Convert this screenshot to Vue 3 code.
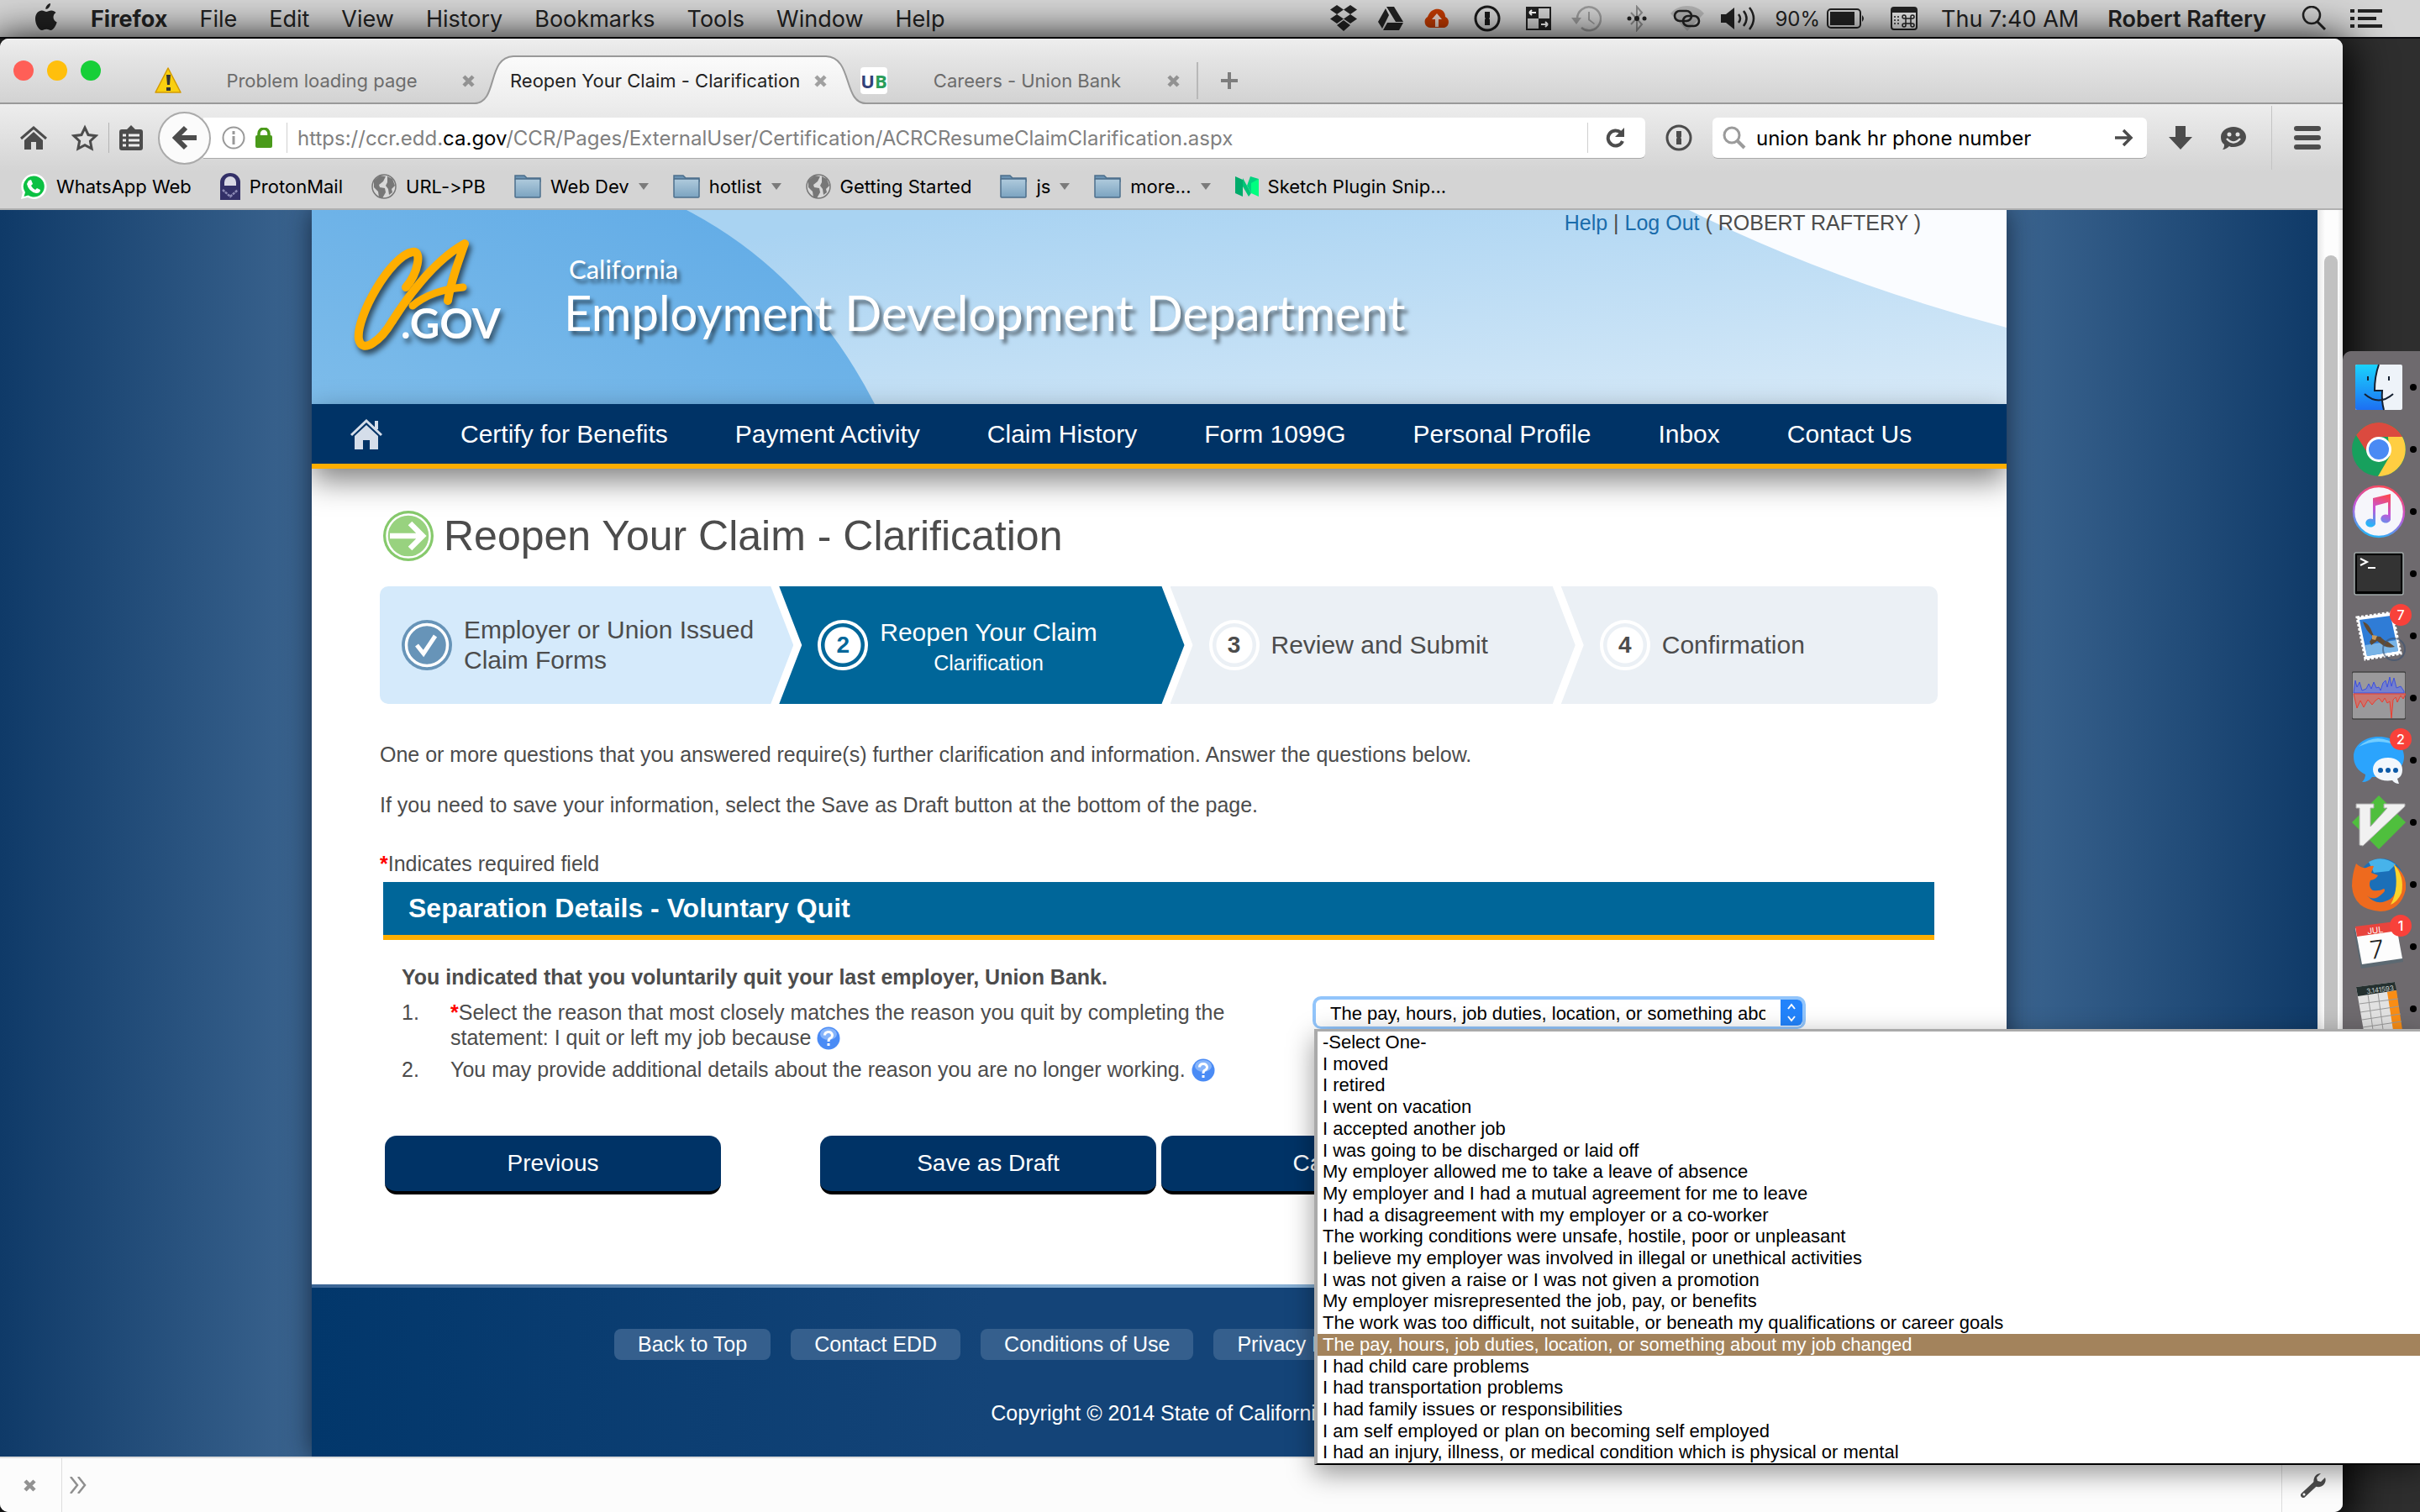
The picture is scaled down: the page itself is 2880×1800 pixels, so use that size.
<script setup>
import { ref } from 'vue'

const menus = ['File', 'Edit', 'View', 'History', 'Bookmarks', 'Tools', 'Window', 'Help']

const bookmarks = [
  { label: 'WhatsApp Web', icon: 'whatsapp' },
  { label: 'ProtonMail', icon: 'proton' },
  { label: 'URL->PB', icon: 'globe' },
  { label: 'Web Dev', icon: 'folder' },
  { label: 'hotlist', icon: 'folder' },
  { label: 'Getting Started', icon: 'globe' },
  { label: 'js', icon: 'folder' },
  { label: 'more...', icon: 'folder' },
  { label: 'Sketch Plugin Snip...', icon: 'medium' },
]

const siteNav = [
  'Certify for Benefits',
  'Payment Activity',
  'Claim History',
  'Form 1099G',
  'Personal Profile',
  'Inbox',
  'Contact Us',
]

const reasons = [
  '-Select One-',
  'I moved',
  'I retired',
  'I went on vacation',
  'I accepted another job',
  'I was going to be discharged or laid off',
  'My employer allowed me to take a leave of absence',
  'My employer and I had a mutual agreement for me to leave',
  'I had a disagreement with my employer or a co-worker',
  'The working conditions were unsafe, hostile, poor or unpleasant',
  'I believe my employer was involved in illegal or unethical activities',
  'I was not given a raise or I was not given a promotion',
  'My employer misrepresented the job, pay, or benefits',
  'The work was too difficult, not suitable, or beneath my qualifications or career goals',
  'The pay, hours, job duties, location, or something about my job changed',
  'I had child care problems',
  'I had transportation problems',
  'I had family issues or responsibilities',
  'I am self employed or plan on becoming self employed',
  'I had an injury, illness, or medical condition which is physical or mental',
]
const reason = ref(reasons[14])
const query = ref('union bank hr phone number')

const footerLinks = ['Back to Top', 'Contact EDD', 'Conditions of Use', 'Privacy Policy']
</script>

<template>
  <div class="desktop">
    <header class="menubar">
      <svg class="apple" width="26" height="32" viewBox="0 0 26 32"><path d="M18 0c.3 3.600-2.600 7-5.600 7C12 3.600 15 .5 18 0zM24.500 11c-4.600 3-3.600 9.600 1.200 11.500C24.500 26.500 21.500 32 18.400 32c-2 0-2.800-1.200-5.200-1.200S10 32 8 32C4 32 0 24.500 0 18.500 0 12 4 8.500 7.800 8.500c2.200 0 4 1.400 5.400 1.400 1.300 0 3.400-1.500 6-1.500 2 0 4 1 5.300 2.600z" fill="#222"/></svg>
      <strong>Firefox</strong>
      <span v-for="m in menus" :key="m">{{ m }}</span>
      <div class="status">
        <svg width="34" height="32" viewBox="0 0 34 32"><g fill="#222"><path d="M9 0l8 5.500L9 11 1 5.500zM25 0l8 5.500-8 5.500-8-5.500zM9 11l8 5.500L9 22l-8-5.500zM25 11l8 5.500-8 5.500-8-5.500zM9 24l8-6 8 6-8 7z"/></g></svg>
        <svg class="g24" width="30" height="28" viewBox="0 0 30 28"><g fill="#222"><path d="M10 0h9l11 18h-9zM9 2l4 8L5 26 0 18zM11 19h19l-5 9H6z"/></g></svg>
        <svg class="g24" width="32" height="24" viewBox="0 0 32 24"><path d="M8 23a7 7 0 0 1-3-13C8 2 14 0 19 1c5 1 7 5 7 9a7 7 0 0 1-1 13z" fill="#c03a00"/><path d="M16 6l6 7h-4v9h-4v-9h-4z" fill="#e8d2c8"/></svg>
        <svg class="g28" width="32" height="32" viewBox="0 0 32 32"><circle cx="16" cy="16" r="14" fill="none" stroke="#1a1a1a" stroke-width="3"/><path d="M13 8h6v7l-1 1 1 1v7h-6v-7l1-1-1-1z" fill="#1a1a1a"/></svg>
        <svg class="g30" width="30" height="28" viewBox="0 0 30 28"><rect x="1" y="1" width="28" height="26" fill="none" stroke="#222" stroke-width="2"/><path d="M0 0h15v14H0zM15 14h15v14H15z" fill="#222"/><path d="M4 7h8M4 7l3-3M4 7l3 3M26 21h-8M26 21l-3-3M26 21l-3 3" stroke="#fff" stroke-width="2" fill="none"/></svg>
        <svg class="g24" width="36" height="32" viewBox="0 0 36 32"><path d="M7 16a14 14 0 1 1 5 11" fill="none" stroke="#9b9b9b" stroke-width="2.500"/><path d="M0 15h12l-6 8zM20 8h2v9l6 5-1 1-7-5z" fill="#9b9b9b"/></svg>
        <svg class="g30" width="24" height="32" viewBox="0 0 24 32"><path d="M5 9l13 14-6 7V2l6 7L5 23" fill="none" stroke="#8c8c8c" stroke-width="2"/><g fill="#222"><circle cx="3" cy="16" r="2.500"/><circle cx="12" cy="16" r="3"/><circle cx="21" cy="16" r="2.500"/></g></svg>
        <svg class="g28" width="40" height="30" viewBox="0 0 40 30"><path d="M0 9C10-3 30-3 40 9L20 30z" fill="#b3b3b3"/><g fill="none" stroke="#222" stroke-width="2.600"><rect x="5" y="6" width="20" height="12" rx="6"/><rect x="15" y="12" width="19" height="12" rx="6"/></g></svg>
        <svg class="g20" width="42" height="30" viewBox="0 0 42 30"><path d="M0 10h6l10-8v26L6 20H0z" fill="#222"/><path d="M21 10q4 5 0 10M27 6q7 9 0 18M34 2q10 13 0 26" fill="none" stroke="#222" stroke-width="2.500"/></svg>
        <span class="g22">90%</span>
        <svg class="g8" width="46" height="24" viewBox="0 0 46 24"><rect x="1" y="1" width="39" height="22" rx="4" fill="none" stroke="#222" stroke-width="2"/><rect x="4" y="4" width="29" height="16" fill="#222"/><path d="M42 8q4 4 0 8z" fill="#222"/></svg>
        <svg class="g30" width="32" height="28" viewBox="0 0 32 28"><rect x="1" y="1" width="30" height="26" rx="3" fill="#e6e6e6" stroke="#222" stroke-width="2"/><path d="M1 1h30v6H1z" fill="#222"/><path d="M4 12h2M8 12h2M4 16h2M8 16h2M4 20h2M8 20h2" stroke="#555" stroke-width="2"/><path d="M18 14h6v6h-6zM18 14h-2a2 2 0 1 1 2-2zM24 14v-2a2 2 0 1 1 2 2zM18 20v2a2 2 0 1 1-2-2zM24 20h2a2 2 0 1 1-2 2z" fill="none" stroke="#222" stroke-width="1.500"/></svg>
        <span class="g28">Thu 7:40 AM</span>
        <span class="g34 semi">Robert Raftery</span>
        <svg class="g42" width="30" height="30" viewBox="0 0 30 30"><circle cx="12" cy="11" r="10" fill="none" stroke="#222" stroke-width="2.500"/><path d="M19 19l9 9" stroke="#222" stroke-width="3"/></svg>
        <svg class="g28" width="38" height="22" viewBox="0 0 38 22"><path d="M0 2h5M9 2h29M0 11h5M9 11h22M0 20h5M9 20h29" stroke="#222" stroke-width="4"/></svg>
      </div>
    </header>

    <div class="stage">
      <div class="window">
        <div class="tabstrip">
          <div class="lights"><i class="red"></i><i class="yellow"></i><i class="green"></i></div>
          <div class="tab first">
            <svg width="32" height="32" viewBox="0 0 32 32"><path d="M16 1l15 29H1z" fill="#f9cf10" stroke="#d39a00" stroke-width="1.500" stroke-linejoin="round"/><path d="M14 9h5l-1 12h-3zM14 24h5v4h-5z" fill="#333"/></svg>
            <span>Problem loading page</span>
            <button class="x" aria-label="Close tab"><svg width="15" height="15" viewBox="0 0 15 15"><path d="M2 2l11 11M13 2L2 13" stroke="#929292" stroke-width="4.500"/></svg></button>
          </div>
          <div class="tab active">
            <svg class="shape" width="465" height="58" viewBox="0 0 465 58" preserveAspectRatio="none">
              <defs><linearGradient id="tabfill" x1="0" y1="0" x2="0" y2="1"><stop offset="0" stop-color="#fbfbfb"/><stop offset="1" stop-color="#ededed"/></linearGradient></defs>
              <path d="M0 58C28 56 14 2 46 1H418C450 2 438 56 465 58z" fill="url(#tabfill)"/>
              <path d="M0 57C28 56 14 2 46 1H418C450 2 438 56 465 57" fill="none" stroke="#999" stroke-width="2"/>
            </svg>
            <span>Reopen Your Claim - Clarification</span>
            <button class="x" aria-label="Close tab"><svg width="15" height="15" viewBox="0 0 15 15"><path d="M2 2l11 11M13 2L2 13" stroke="#a0a0a0" stroke-width="4.500"/></svg></button>
          </div>
          <div class="tab third">
            <b class="ub"><em>U</em>B</b>
            <span>Careers - Union Bank</span>
            <button class="x" aria-label="Close tab"><svg width="15" height="15" viewBox="0 0 15 15"><path d="M2 2l11 11M13 2L2 13" stroke="#929292" stroke-width="4.500"/></svg></button>
          </div>
          <i class="tabsep"></i>
          <button class="plus" aria-label="New tab"><svg width="22" height="22" viewBox="0 0 22 22"><path d="M11 1v20M1 11h20" stroke="#7d7d7d" stroke-width="4"/></svg></button>
        </div>

        <div class="toolbar">
          <svg class="home" width="32" height="28" viewBox="0 0 32 28"><path d="M1 15L16 2l15 13" fill="none" stroke="#4c4c4c" stroke-width="3"/><path d="M5 17L16 7l11 10v11h-8v-9h-6v9H5z" fill="#4c4c4c"/></svg>
          <svg class="star" width="32" height="32" viewBox="0 0 32 32"><path d="M16 4l4 8.500 9 1.200-6.600 6.300 1.700 9L16 24.600 7.900 29l1.700-9L3 13.700l9-1.200z" fill="none" stroke="#4c4c4c" stroke-width="3"/></svg>
          <i class="sep"></i>
          <svg width="28" height="30" viewBox="0 0 28 30"><path d="M3 5h6l5-5 5 5h6a3 3 0 0 1 3 3v19a3 3 0 0 1-3 3H3a3 3 0 0 1-3-3V8a3 3 0 0 1 3-3z" fill="#4c4c4c"/><path d="M4 12h4M11 12h13M4 18h4M11 18h13M4 24h4M11 24h13" stroke="#eee" stroke-width="3"/></svg>
          <button class="back" aria-label="Back"><svg width="30" height="30" viewBox="0 0 30 30"><path d="M16 3L4 15l12 12M5 15h24" fill="none" stroke="#4c4c4c" stroke-width="6"/></svg></button>
          <div class="urlbar">
            <svg width="28" height="28" viewBox="0 0 28 28"><circle cx="14" cy="14" r="12.500" fill="none" stroke="#999" stroke-width="2"/><path d="M12.500 6h3v4h-3zM12.500 12h3v10h-3z" fill="#999"/></svg>
            <svg class="lock" width="20" height="24" viewBox="0 0 20 24"><path d="M4 11V7a6 6 0 0 1 12 0v4" fill="none" stroke="#4a9a1a" stroke-width="3.500"/><rect y="9" width="20" height="15" rx="2" fill="#4a9a1a"/></svg>
            <i class="sep"></i>
            <div class="url" role="textbox" aria-label="Address">https://ccr.edd.<span>ca.gov</span>/CCR/Pages/ExternalUser/Certification/ACRCResumeClaimClarification.aspx</div>
            <i class="sep"></i>
            <button class="reload" aria-label="Reload"><svg width="24" height="24" viewBox="0 0 24 24"><path d="M19 6a9 9 0 1 0 2 10" fill="none" stroke="#4c4c4c" stroke-width="4"/><path d="M23 0v11H12z" fill="#4c4c4c"/></svg></button>
          </div>
          <svg class="onep" width="32" height="32" viewBox="0 0 32 32"><circle cx="16" cy="16" r="14" fill="none" stroke="#4c4c4c" stroke-width="3"/><path d="M13 8h6v7l-1 1 1 1v7h-6v-7l1-1-1-1z" fill="#4c4c4c"/></svg>
          <label class="search">
            <svg width="28" height="28" viewBox="0 0 28 28"><circle cx="11" cy="11" r="9" fill="none" stroke="#9b9b9b" stroke-width="3"/><path d="M17 17l9 9" stroke="#9b9b9b" stroke-width="4"/></svg>
            <input v-model="query" type="text" aria-label="Search">
            <svg width="22" height="22" viewBox="0 0 22 22"><path d="M0 11h19M10 2l9 9-9 9" fill="none" stroke="#4c4c4c" stroke-width="3.500"/></svg>
          </label>
          <svg class="dl" width="28" height="28" viewBox="0 0 28 28"><path d="M8 0h12v13h8L14 28 0 13h8z" fill="#4c4c4c"/></svg>
          <svg class="smile" width="30" height="28" viewBox="0 0 30 28"><path d="M15 1c8 0 15 5 15 12S23 25 15 25c-2 0-4 0-5-1-2 2-5 4-8 4 2-2 2-4 2-6C1 20 0 17 0 13 0 6 7 1 15 1z" fill="#4c4c4c"/><circle cx="10" cy="10" r="2.500" fill="#e4e4e4"/><circle cx="20" cy="10" r="2.500" fill="#e4e4e4"/><path d="M7 15q8 9 16 0" fill="none" stroke="#e4e4e4" stroke-width="2.500"/></svg>
          <i class="sep tall"></i>
          <svg class="burger" width="32" height="28" viewBox="0 0 32 28"><path d="M3 3h26M3 14h26M3 25h26" stroke="#4c4c4c" stroke-width="6" stroke-linecap="round"/></svg>
        </div>

        <nav class="bookmarks">
          <a v-for="b in bookmarks" :key="b.label" href="#" :class="b.icon">
            <svg v-if="b.icon === 'whatsapp'" width="32" height="32" viewBox="0 0 32 32"><path d="M16 1a15 15 0 1 1-7 28l-8 2 2-8A15 15 0 0 1 16 1z" fill="#fff"/><path d="M16 3.500a12.500 12.500 0 1 1-6.500 23L4.500 28l1.500-5A12.500 12.500 0 0 1 16 3.500z" fill="#0cc143"/><path d="M10 9l3-1 2 5-2 2q2 4 5 5l2-2 4 2q0 4-5 4-9-2-11-11z" fill="#fff"/></svg>
            <svg v-else-if="b.icon === 'proton'" width="24" height="32" viewBox="0 0 24 32"><path d="M0 32V11a12 11 0 0 1 24 0v21z" fill="#333068"/><path d="M5 15v-4a7 7 0 0 1 14 0v4z" fill="#d8d8e4"/><path d="M3 20l9 8 9-8" fill="none" stroke="#8c8ab5" stroke-width="2.500" stroke-dasharray="3 1"/></svg>
            <svg v-else-if="b.icon === 'globe'" width="30" height="30" viewBox="0 0 30 30"><circle cx="15" cy="15" r="14" fill="#d8d8d8" stroke="#777" stroke-width="1.500"/><path d="M3 8l7-6 7 1-3 6-5 4 1 3 6 1 1 5-4 7-4-1-1-7-5-5zM19 3l6 3 3 8-4 4 1 4-4 3-1-7-3-4 2-4z" fill="#777"/></svg>
            <svg v-else-if="b.icon === 'folder'" width="32" height="30" viewBox="0 0 32 30"><defs><linearGradient id="fold" x1="0" y1="0" x2="0" y2="1"><stop offset="0" stop-color="#b0cbdd"/><stop offset="1" stop-color="#7ba3c0"/></linearGradient></defs><path d="M1 6V2h11l3 3h16v4z" fill="#6c93b3" stroke="#4c6f8c" stroke-width="1.500"/><rect x="1" y="6" width="30" height="22" rx="1" fill="url(#fold)" stroke="#4c6f8c" stroke-width="1.500"/></svg>
            <svg v-else width="28" height="24" viewBox="0 0 28 24"><path d="M0 0l9 4v20l-9-4z" fill="#00ab6b"/><path d="M9 2l10 18-3 4L9 12z" fill="#00c477"/><path d="M18 0l10 3-9 17-5-9z" fill="#00d37f"/><path d="M19 8l9-5v21l-9-4z" fill="#00ff80"/></svg>
            {{ b.label }}
            <svg v-if="b.icon === 'folder'" class="caret" width="12" height="8" viewBox="0 0 12 8"><path d="M0 0h12L6 8z" fill="#7b7b7b"/></svg>
          </a>
        </nav>

        <div class="viewport">
          <div class="page">
            <div class="site">
              <div class="banner">
                <svg class="waves" viewBox="0 0 2017 231" preserveAspectRatio="none">
                  <defs>
                    <linearGradient id="deep" x1="0" y1="1" x2="1" y2="0"><stop offset="0" stop-color="#7dbcea"/><stop offset="1" stop-color="#5faae6"/></linearGradient>
                    <linearGradient id="pale" x1="0" y1="0" x2="1" y2="1"><stop offset="0.200" stop-color="#a9d3f2"/><stop offset="1" stop-color="#d8eaf8"/></linearGradient>
                  </defs>
                  <rect width="2017" height="231" fill="url(#pale)"/>
                  <path d="M0 0H446Q590 75 670 231H0z" fill="url(#deep)"/>
                  <path d="M1639 0Q1810 85 2017 140V0z" fill="#fafcff"/>
                </svg>
                <div class="account"><a href="#">Help</a> | <a href="#">Log Out</a> ( ROBERT RAFTERY )</div>
                <div class="brand">
                  <svg class="logo" width="180" height="146" viewBox="0 0 180 146" role="img" aria-label="CA.GOV">
                    <g fill="none" stroke="#ffae00" stroke-linecap="round" stroke-linejoin="round">
                      <path d="M62 62C76 46 82 18 70 20C44 24 2 98 6 124C10 142 32 126 46 102" stroke-width="10"/>
                      <path d="M46 102C64 74 96 30 132 10C126 28 116 52 112 78" stroke-width="10"/>
                      <path d="M70 84C84 72 106 64 130 62" stroke-width="9"/>
                    </g>
                    <text x="56" y="123" font-family="Lato, sans-serif" font-weight="700" font-size="49" fill="#fff">.GOV</text>
                  </svg>
                  <div class="names">
                    <span class="state">California</span>
                    <span class="dept">Employment Development Department</span>
                  </div>
                </div>
              </div>

              <nav class="sitenav">
                <a href="#" aria-label="Home"><svg width="38" height="36" viewBox="0 0 38 36"><path d="M1 19L19 2l18 17" fill="none" stroke="#d5deea" stroke-width="3"/><path d="M29 2h4v10h-4zM5 20L19 7l14 13v16H23V25h-8v11H5z" fill="#d5deea"/></svg></a>
                <a v-for="n in siteNav" :key="n" href="#">{{ n }}</a>
              </nav>

              <main>
                <h1>
                  <svg width="60" height="60" viewBox="0 0 60 60"><circle cx="30" cy="30" r="30" fill="#86c96c"/><circle cx="30" cy="30" r="25.500" fill="#98d27f" stroke="#fff" stroke-width="2.500"/><path d="M8 30h38M32 15l15 15-15 15" fill="none" stroke="#fff" stroke-width="6.500"/></svg>
                  Reopen Your Claim - Clarification
                </h1>

                <ol class="steps">
                  <li class="done">
                    <svg width="60" height="60" viewBox="0 0 60 60"><circle cx="30" cy="30" r="30" fill="#6794b8"/><circle cx="30" cy="30" r="24.500" fill="#6794b8" stroke="#fff" stroke-width="3.500"/><path d="M18 30l8 10 14-21" fill="none" stroke="#fff" stroke-width="5"/></svg>
                    <span>Employer or Union Issued<br>Claim Forms</span>
                  </li>
                  <li class="current"><b>2</b><span>Reopen Your Claim<small>Clarification</small></span></li>
                  <li class="next"><b>3</b><span>Review and Submit</span></li>
                  <li class="last"><b>4</b><span>Confirmation</span></li>
                </ol>

                <p>One or more questions that you answered require(s) further clarification and information. Answer the questions below.</p>
                <p>If you need to save your information, select the Save as Draft button at the bottom of the page.</p>
                <p class="required"><em>*</em>Indicates required field</p>

                <h2>Separation Details - Voluntary Quit</h2>
                <div class="questions">
                  <strong>You indicated that you voluntarily quit your last employer, Union Bank.</strong>
                  <div class="question">
                    <span>1.</span>
                    <label for="reason"><em>*</em>Select the reason that most closely matches the reason you quit by completing the statement: I quit or left my job because <svg class="help" width="28" height="28" viewBox="0 0 28 28"><circle cx="14" cy="14" r="13.500" fill="#4a8bf5"/><ellipse cx="14" cy="9" rx="10" ry="7" fill="#86b4fa"/><path d="M9.500 10.500a4.500 4 0 1 1 6.500 3.500q-2 1-2 4M14 20v3" fill="none" stroke="#fff" stroke-width="3"/></svg></label>
                    <div class="picker">
                      <select id="reason" v-model="reason">
                        <option v-for="r in reasons" :key="r">{{ r }}</option>
                      </select>
                      <svg class="arrows" width="26" height="31" viewBox="0 0 26 31"><path d="M0 0h20a6 6 0 0 1 6 6v19a6 6 0 0 1-6 6H0z" fill="#2283fb"/><path d="M9 11l4-5 4 5M9 20l4 5 4-5" fill="none" stroke="#fff" stroke-width="2"/></svg>
                      <ul class="popup" role="listbox">
                        <li v-for="r in reasons" :key="r" role="option" :class="{ chosen: r === reason }">{{ r }}</li>
                      </ul>
                    </div>
                  </div>
                  <div class="question">
                    <span>2.</span>
                    <div>You may provide additional details about the reason you are no longer working. <svg class="help" width="28" height="28" viewBox="0 0 28 28"><circle cx="14" cy="14" r="13.500" fill="#4a8bf5"/><ellipse cx="14" cy="9" rx="10" ry="7" fill="#86b4fa"/><path d="M9.500 10.500a4.500 4 0 1 1 6.500 3.500q-2 1-2 4M14 20v3" fill="none" stroke="#fff" stroke-width="3"/></svg></div>
                  </div>
                </div>

                <div class="actions">
                  <button>Previous</button>
                  <div><button>Save as Draft</button><button>Cancel</button></div>
                </div>
              </main>

              <footer>
                <div class="links"><a v-for="l in footerLinks" :key="l" href="#">{{ l }}</a></div>
                <p>Copyright © 2014 State of California</p>
              </footer>
            </div>
          </div>
          <div class="scrollbar"><i></i></div>
        </div>

        <div class="devbar">
          <button class="x" aria-label="Close"><svg width="15" height="15" viewBox="0 0 15 15"><path d="M2 2l11 11M13 2L2 13" stroke="#929292" stroke-width="4.500"/></svg></button>
          <svg class="chev" width="22" height="20" viewBox="0 0 22 20"><path d="M2 0l8 10-8 10M11 0l8 10-8 10" fill="none" stroke="#8f8f8f" stroke-width="2.500"/></svg>
          <div class="tools">
            <svg width="30" height="30" viewBox="0 0 30 30"><path d="M3 27L18 13" stroke="#4c4c4c" stroke-width="6" stroke-linecap="round"/><path d="M24 1l-5 5 1 4 4 1 5-5c3 7-5 14-12 10-4-7 0-15 7-15z" fill="#4c4c4c"/><circle cx="4" cy="26" r="1.500" fill="#fff"/></svg>
          </div>
        </div>
      </div>

      <aside class="dock">
        <div class="app"><svg width="64" height="64" viewBox="0 0 64 64"><defs><linearGradient id="fb" x1="0" y1="0" x2="0" y2="1"><stop offset="0" stop-color="#1ad3fd"/><stop offset="1" stop-color="#1d6ff2"/></linearGradient></defs><rect x="4" y="5" width="56" height="54" rx="2" fill="#eef3f9"/><path d="M4 7a2 2 0 0 1 2-2h26q-5 14-5 31h9q-1 12 2 23H6a2 2 0 0 1-2-2z" fill="url(#fb)"/><path d="M19 19v5M44 19v5M15 40q17 15 34 0M32 5q-5 14-5 31h9q-1 12 2 23" fill="none" stroke="#152030" stroke-width="2"/></svg></div>
        <div class="app"><svg width="64" height="64" viewBox="0 0 64 64"><circle cx="32" cy="32" r="32" fill="#17a05d"/><path d="M32 0a32 32 0 0 1 28 17H32L22 42 5 15A32 32 0 0 1 32 0z" fill="#db4a3f"/><path d="M60 17a32 32 0 0 1-29 47l14-24-2-23z" fill="#ffce42"/><circle cx="32" cy="32" r="15" fill="#fff"/><circle cx="32" cy="32" r="12" fill="#4a8af4"/></svg></div>
        <div class="app"><svg width="64" height="64" viewBox="0 0 64 64"><defs><linearGradient id="it" x1="0.700" y1="0" x2="0.400" y2="1"><stop offset="0" stop-color="#fc4955"/><stop offset="0.500" stop-color="#c555d8"/><stop offset="1" stop-color="#28b4f8"/></linearGradient></defs><circle cx="32" cy="32" r="30" fill="#f6f6fb" stroke="url(#it)" stroke-width="2.500"/><path d="M25 16l21-5v31a6 5 0 1 1-3-6V21l-15 4v22a6 5 0 1 1-3-6z" fill="url(#it)"/></svg></div>
        <div class="app"><svg width="64" height="64" viewBox="0 0 64 64"><rect x="3" y="7" width="58" height="50" rx="2" fill="#000" stroke="#a0a8a8" stroke-width="1.500"/><rect x="6" y="10" width="52" height="43" fill="#333"/><path d="M10 14l8 4-8 4M19 25h9" fill="none" stroke="#fff" stroke-width="2"/></svg></div>
        <div class="app"><svg width="64" height="64" viewBox="0 0 64 64"><path d="M6 10l42-6 10 49-42 7z" fill="#fff" stroke="#fff" stroke-width="3" stroke-dasharray="3 2"/><path d="M9 13l37-5 9 42-37 6z" fill="#2f7cd6"/><path d="M16 43l37-6 2 13-37 6z" fill="#79b4e6"/><path d="M13 15q6 2 9 8l4 9 8 1q4 5 9 6l8 6q-7 2-13-1l-8-6-7 5-2-4 4-6q-9-8-12-18z" fill="#5f4a34"/><path d="M24 31l6 1-2 5-4-1z" fill="#c79a5c"/><circle cx="50" cy="48" r="13" fill="none" stroke="#3a5272" stroke-width="2" opacity="0.600"/></svg><b>7</b></div>
        <div class="app"><svg width="64" height="64" viewBox="0 0 64 64"><rect x="0" y="1" width="64" height="56" rx="2" fill="#9a999b" stroke="#444" stroke-width="1.500"/><path d="M2 26l2-15 2 8 3-6 3 10 5-2 3-6 3 6 3-8 3 7 3-1 2 4 3-9 3-3 2 8 3-12 2 11 3-10 3 12 5-2 4 6v2H2z" fill="#7480cf" stroke="#3c4fe0"/><path d="M2 27h62l-3 6-3-4-4 8-2-6-3 3-2 22-2-20-3 2-3-6-3 5-4-5-4 3-4 5-5-6-5 9-4-8-4 9z" fill="#c9766f" stroke="#ea3d30"/></svg></div>
        <div class="app"><svg width="64" height="64" viewBox="0 0 64 64"><path d="M32 4c17 0 30 10 30 24S49 52 32 52h-8q-4 6-12 6 4-4 4-9C7 45 2 37 2 28 2 14 15 4 32 4z" fill="#2ba4fd"/><path d="M8 16Q30-4 56 16 32 4 8 16z" fill="#72cdff"/><path d="M43 29c10 0 17 6 17 14 0 6-2 9-6 11l2 6q-5 0-8-4c-14 2-23-4-23-13 0-8 7-14 18-14z" fill="#f2f7fc"/><g fill="#0b5aa8"><circle cx="34" cy="44" r="3"/><circle cx="43" cy="44" r="3"/><circle cx="52" cy="44" r="3"/></g></svg><b>2</b></div>
        <div class="app"><svg width="64" height="64" viewBox="0 0 64 64"><path d="M32 0l32 32-32 32L0 32z" fill="#4fbf3d"/><path d="M5 10h21v5h-4v22l20-22h-4v-5h25v3L13 60l-4-1V15H5z" fill="#f1f1f1" stroke="#aaa"/></svg></div>
        <div class="app"><svg width="64" height="64" viewBox="0 0 64 64"><circle cx="35" cy="28" r="27" fill="#1b6fb8"/><path d="M20 5Q36-4 52 8l-8 8-18 2z" fill="#47b3ea"/><path d="M5 7q6 6 12 5 6-3 9-2l-3 8 8 3q-2 5-9 6-3 8 3 12 8 1 13-2 3 2-2 6-10 10-18 2 12 14 28 4Q58 40 50 8q16 12 14 30Q58 63 34 64 2 62 0 34 0 20 5 7z" fill="#ee6a1e"/><path d="M50 8q13 14 9 34-5 11-13 14Q57 36 50 8z" fill="#fbd42c"/></svg></div>
        <div class="app"><svg width="64" height="64" viewBox="0 0 64 64"><path d="M2 12l50-7 9 45-50 8z" fill="#5c6972"/><path d="M4 10l48-7 8 43-48 7z" fill="#fdfdfd"/><path d="M4 8l48-6 3 11L6 20z" fill="#e8443d"/><text x="28" y="16" text-anchor="middle" font-family="Inter, sans-serif" font-size="10" fill="#fff" transform="rotate(-7 28 16)">JUL</text><text x="31" y="46" text-anchor="middle" font-family="Inter, sans-serif" font-weight="300" font-size="30" fill="#222" transform="rotate(-7 31 46)">7</text></svg><b>1</b></div>
        <div class="app"><svg width="64" height="64" viewBox="0 0 64 64"><path d="M5 6l46-6 9 64H15z" fill="#e2e2e2"/><path d="M5 6l46-6 2 10-46 7z" fill="#24302f"/><path d="M42 12l11-2 8 54H50z" fill="#f98d14"/><path d="M9 26l46-6M10 36l46-7M12 45l46-7M13 54l46-7M19 15l7 49M31 13l7 51" stroke="#999" stroke-width="1"/><text x="34" y="12" text-anchor="middle" font-family="Inter, sans-serif" font-size="8" fill="#c8d0d0" transform="rotate(-7 34 12)">3.141593</text></svg></div>
      </aside>
    </div>
  </div>
</template>

<style>
html, body { background: #2e2e2e; }
</style>

<style scoped>
* { box-sizing: border-box; }
svg { display: block; flex: none; }
button { border: 0; padding: 0; background: none; font: inherit; color: inherit; }
a { color: inherit; text-decoration: none; }
em { font-style: normal; }
.desktop { min-height: 100vh; display: flex; flex-direction: column; overflow: hidden; background: #2e2e2e; font-family: Inter, "Liberation Sans", sans-serif; font-feature-settings: "calt" 0; color: #222; }

.menubar { height: 44px; display: flex; align-items: center; gap: 38px; padding: 0 45px 0 42px; background: #d4d4d4; font-size: 27px; white-space: nowrap; }
.apple { margin: 0 2px 4px 0; }
.status { margin-left: auto; display: flex; align-items: center; }
.semi { font-weight: 600; }
.g8 { margin-left: 8px; }
.g20 { margin-left: 20px; }
.g22 { margin-left: 22px; font-size: 24px; }
.g24 { margin-left: 24px; }
.g28 { margin-left: 28px; }
.g30 { margin-left: 30px; }
.g34 { margin-left: 34px; }
.g42 { margin-left: 42px; }

.stage { flex: 1; display: flex; border-top: 2px solid #0c0c10; background: #2e2e2e; }
.window { flex: 1; min-width: 0; display: flex; flex-direction: column; border-radius: 10px; background: #fcfcfc; box-shadow: 0 10px 50px 10px #000; }

.tabstrip { height: 78px; display: flex; align-items: flex-end; border-radius: 10px 10px 0 0; background: linear-gradient(#eee, #e4e4e4 30%, #d2d2d2); box-shadow: inset 0 -2px #999; font-size: 22px; color: #6c6c6c; }
.lights { display: flex; gap: 16px; margin: 0 64px 28px 16px; }
.lights i { width: 24px; height: 24px; border-radius: 50%; }
.red { background: #ff5f57; }
.yellow { background: #ffbf0c; }
.green { background: #16cf38; }
.tab { height: 58px; display: flex; align-items: center; padding-top: 2px; white-space: nowrap; }
.tab span { flex: 1; text-align: center; }
.first { width: 381px; }
.active { position: relative; width: 465px; padding: 2px 46px 0 42px; color: #222; }
.active span { position: relative; text-align: left; }
.active .x { position: relative; }
.shape { position: absolute; inset: 0; }
.third { width: 380px; margin-left: -6px; }
.ub { width: 32px; height: 32px; border-radius: 4px; background: #fff; color: #2a9d5a; font: 700 22px/32px "Open Sans", sans-serif; text-align: center; }
.ub em { color: #33427a; }
.tabsep { width: 2px; height: 44px; margin: 0 26px 6px 20px; background: #b8b8b8; }
.plus { margin-bottom: 17px; }

.toolbar { height: 80px; display: flex; align-items: center; padding: 0 26px 0 24px; background: linear-gradient(#ededed, #d4d4d4); }
.star { margin: 0 12px 0 29px; }
.sep { width: 1px; height: 36px; margin-right: 12px; background: #b4b4b4; }
.back { position: relative; width: 63px; height: 63px; margin-left: 18px; display: grid; place-items: center; border: 2px solid #aaa; border-radius: 50%; background: #fbfbfb; }
.urlbar { flex: 1; min-width: 0; height: 49px; display: flex; align-items: center; margin-left: -9px; padding: 0 24px 0 22px; border-bottom: 1px solid #aaa; border-radius: 0 6px 6px 0; background: #fff; font-size: 24px; }
.lock { margin: 0 17px 0 12px; }
.url { flex: 1; padding-top: 2px; white-space: nowrap; color: #808080; }
.url span { color: #000; }
.urlbar .sep { background: #d0d0d0; }
.reload { margin-left: 8px; }
.onep { margin: 0 24px; }
.search { width: 517px; height: 49px; display: flex; align-items: center; gap: 12px; padding: 0 16px 0 12px; border-bottom: 1px solid #aaa; border-radius: 6px; background: #fff; }
.search input { flex: 1; min-width: 0; border: 0; outline: 0; padding: 2px 0 0; background: none; font: 24px Inter, sans-serif; color: #000; }
.dl { margin-left: 26px; }
.smile { margin: 0 30px 0 34px; }
.tall { height: 76px; margin-right: 26px; background: #c4c4c4; }

.bookmarks { height: 46px; display: flex; align-items: flex-start; gap: 34px; padding-left: 24px; background: #d4d4d4; border-bottom: 2px solid #b0b0b0; font-size: 22px; color: #000; }
.bookmarks a { height: 36px; display: flex; align-items: center; gap: 11px; white-space: nowrap; }
.bookmarks .folder { margin-right: -5px; }

.viewport { position: relative; z-index: 5; flex: 1; display: flex; clip-path: inset(0 -200px -66px 0); }
.page { flex: 1; min-width: 0; display: flex; padding: 0 370px 0 371px; background: linear-gradient(90deg, #0f3a68, #3a638e 13%, #3a638e 87%, #0f3a68); font-family: "Liberation Sans", Arial, sans-serif; font-size: 25px; line-height: 30px; color: #4c4c4c; }
.site { position: relative; z-index: 1; flex: 1; min-width: 0; display: flex; flex-direction: column; background: #fff; }
.site::before { content: ""; position: absolute; z-index: -1; inset: 0; box-shadow: 0 0 30px rgba(10, 20, 35, .7); clip-path: inset(0 -40px); }
.scrollbar { width: 30px; padding: 54px 6px 0 8px; background: linear-gradient(90deg, #e6e6e6, #fdfdfd 30%, #fdfdfd 80%, #e4e4e4); }
.scrollbar i { display: block; width: 16px; height: 1000px; border-radius: 8px; background: #c1c1c1; }

.banner { position: relative; height: 231px; }
.waves { position: absolute; width: 100%; height: 100%; }
.account { position: relative; padding-right: 102px; text-align: right; }
.account a { color: #1a6cab; }
.brand { position: relative; display: flex; padding-left: 50px; color: #fff; }
.logo { filter: drop-shadow(3px 5px 3px rgba(0, 0, 0, .6)); }
.names { display: flex; flex-direction: column; padding: 22px 0 0 70px; font-family: Lato, sans-serif; text-shadow: 4px 5px 4px rgba(0, 0, 0, .5); }
.state { padding-left: 6px; font-size: 31px; line-height: 36px; }
.dept { font-size: 58px; line-height: 68px; white-space: nowrap; }

.sitenav { position: relative; height: 77px; display: flex; align-items: center; gap: 80px; padding-left: 46px; border-bottom: 6px solid #ffae00; background: #003366; color: #fff; font-size: 30px; white-space: nowrap; box-shadow: 0 14px 36px rgba(0, 0, 0, .5); clip-path: inset(-30px 0 -60px 0); }
.sitenav a:first-child { margin-right: 13px; }

main { padding: 50px 82px 107px 81px; }
h1 { height: 60px; display: flex; align-items: center; gap: 12px; margin: 0 0 30px 4px; font-size: 50px; font-weight: 400; }
.steps { height: 140px; display: flex; margin: 0 0 45px; padding: 0; list-style: none; border-radius: 10px; overflow: hidden; font-size: 30px; line-height: 36px; white-space: nowrap; }
.steps li { flex: 1 1 482px; display: flex; align-items: center; gap: 14px; padding-left: 46px; margin-left: -17px; background: #ebf0f5; clip-path: polygon(0 0, calc(100% - 27px) 0, 100% 50%, calc(100% - 27px) 100%, 0 100%, 27px 50%); }
.steps .done { flex-basis: 492px; margin-left: 0; padding-left: 26px; background: #d5eafb; clip-path: polygon(0 0, calc(100% - 27px) 0, 100% 50%, calc(100% - 27px) 100%, 0 100%); }
.steps .current { background: #006699; color: #fff; }
.steps .current span { padding-top: 5px; }
.steps .last { flex-basis: 448px; clip-path: polygon(0 0, 100% 0, 100% 100%, 0 100%, 27px 50%); }
.steps b { width: 60px; height: 60px; border: 4px solid #fff; border-radius: 50%; background: radial-gradient(circle, #fff 21px, transparent 22px); font-size: 28px; line-height: 52px; text-align: center; color: #4c4c4c; }
.steps .current b { color: #006699; }
.steps small { display: block; font-size: 25px; text-align: center; }
p { margin: 0 0 30px; }
.required { margin: 40px 0 7px; }
.required em, label em { color: #f00; font-weight: 700; }
h2 { height: 69px; margin: 0 4px; padding-left: 30px; border-bottom: 6px solid #ffae00; background: #006699; color: #fff; font-size: 32px; line-height: 63px; }
.questions { padding: 29px 0 0 26px; }
.questions strong { display: block; margin-bottom: 12px; }
.question { display: grid; grid-template-columns: 58px 950px 1fr; margin-bottom: 8px; }
.help { display: inline-block; margin: -4px 0; vertical-align: -2px; }
.picker { position: relative; width: 579px; margin-left: 80px; height: 31px; border-radius: 6px; box-shadow: 0 0 0 4px #92c5fb; }
select { width: 100%; height: 31px; padding: 1px 44px 0 17px; appearance: none; border: 0; outline: 0; border-radius: 6px; background: #fff; font: 22px "Liberation Sans", Arial, sans-serif; color: #000; }
.arrows { position: absolute; right: 0; top: 0; }
.popup { position: absolute; z-index: 10; left: -2px; top: 35px; width: 1320px; height: 519px; display: flex; flex-direction: column; margin: 0; padding: 0; list-style: none; border: solid #aaa; border-width: 3px 0 0 4px; border-bottom: 2px solid #000; background: #fff; box-shadow: 0 10px 30px rgba(0, 0, 0, .4); font-size: 22px; color: #000; white-space: nowrap; }
.popup li { flex: 1; min-height: 0; padding-left: 6px; line-height: 25px; }
.popup .chosen { background: #a3835c; color: #fff; }
.actions { display: flex; gap: 118px; margin: 64px 0 0 6px; }
.actions div { display: flex; gap: 6px; }
.actions button { width: 400px; height: 70px; border-bottom: 4px solid #000; border-radius: 14px; background: #003366; color: #fff; font-size: 28px; }

footer { flex: 1; padding-top: 49px; border-top: 4px solid; border-image: linear-gradient(90deg, #3a6494, #8cb4d8 45%, #8cb4d8 55%, #3a6494) 1; background: linear-gradient(90deg, #02376b, #144478 40%, #144478 60%, #02376b); color: #fff; }
.links { display: flex; gap: 24px; padding-left: 360px; margin-bottom: 48px; }
.links a { height: 37px; padding: 0 28px; border-radius: 8px; background: #355f8d; line-height: 36px; white-space: nowrap; }
footer p { text-align: center; margin: 0; }

.devbar { height: 66px; display: flex; align-items: center; border-top: 2px solid #ddd; border-radius: 0 0 10px 10px; background: #fcfcfc; }
.devbar .x { height: 64px; padding: 0 30px 0 28px; border-right: 1px solid #ddd; }
.chev { margin-left: 8px; }
.tools { height: 64px; display: flex; align-items: center; margin-left: auto; padding: 0 20px 0 22px; border-left: 1px solid #ddd; }

.dock { flex: none; width: 92px; align-self: flex-start; margin-top: 372px; padding: 6px 0 6px 11px; border-radius: 10px 0 0; background: #6e6a6e; position: relative; }
.app { position: relative; height: 74px; display: flex; align-items: center; }
.app::after { content: ""; width: 8px; height: 8px; margin-left: 5px; border-radius: 50%; background: #000; }
.app b { position: absolute; left: 45px; top: -1px; width: 26px; height: 26px; border-radius: 50%; background: #f8413a; color: #fff; font-size: 16px; font-weight: 500; line-height: 26px; text-align: center; }
</style>
